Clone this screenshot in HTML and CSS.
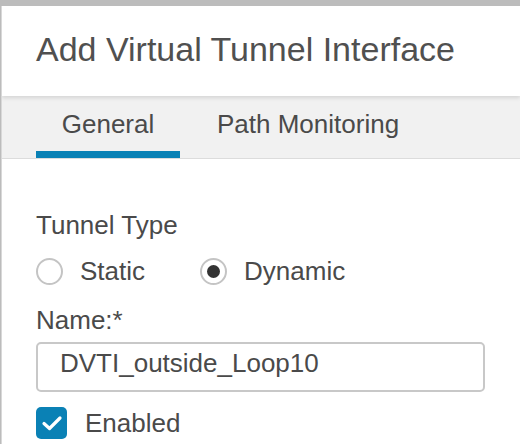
FILE: index.html
```html
<!DOCTYPE html>
<html>
<head>
<meta charset="utf-8">
<link rel="stylesheet" href="styles.css">
</head>
<body>
<div class="dialog">
  <div class="header">
    <h1 class="title">Add Virtual Tunnel Interface</h1>
  </div>
  <div class="tabs">
    <div class="tab active">General</div>
    <div class="tab">Path Monitoring</div>
  </div>
  <div class="body">
    <div class="label">Tunnel Type</div>
    <div class="radios">
      <label class="radio"><span class="circle"></span><span>Static</span></label>
      <label class="radio"><span class="circle checked"></span><span>Dynamic</span></label>
    </div>
    <div class="label name">Name:*</div>
    <div class="input">DVTI_outside_Loop10</div>
    <label class="check">
      <span class="box"><svg width="22" height="18" viewBox="0 0 22 18"><path d="M3 9.5 L8.5 14.5 L19 4" fill="none" stroke="#fff" stroke-width="3.2" stroke-linecap="round" stroke-linejoin="round"/></svg></span>
      <span>Enabled</span>
    </label>
  </div>
</div>
</body>
</html>
```
FILE: styles.css
```css
html, body {
  margin: 0;
  padding: 0;
  background: #bcbcbc;
  font-family: "Liberation Sans", Arial, sans-serif;
  color: #4a4a4a;
}
.dialog {
  margin: 6px 0 0 1px;
  border-left: 1px solid #d8d8d8;
  background: #fff;
  height: 438px;
  overflow: hidden;
}
.header {
  height: 90px;
  box-sizing: border-box;
  padding: 23px 0 0 34px;
  box-shadow: 0 2px 4px rgba(0,0,0,0.12);
  position: relative;
}
.title {
  margin: 0;
  font-weight: normal;
  font-size: 34px;
  line-height: 40px;
  color: #505050;
}
.tabs {
  background: #f1f1f1;
  height: 63px;
  border-bottom: 1px solid #dcdcdc;
  display: flex;
  padding-left: 34px;
  box-sizing: border-box;
}
.tab {
  font-size: 26px;
  line-height: 30px;
  color: #4a4a4a;
  padding-top: 13px;
  box-sizing: border-box;
  height: 62px;
  border-bottom: 7px solid transparent;
  white-space: nowrap;
}
.tab.active {
  border-bottom-color: #0a81b5;
  width: 144px;
  text-align: center;
}
.tab + .tab {
  margin-left: 37px;
}
.body {
  padding: 51px 0 0 34px;
}
.label {
  font-size: 26px;
  color: #4a4a4a;
  line-height: 30px;
}
.radios {
  display: flex;
  margin-top: 17px;
  height: 28px;
  align-items: center;
}
.radio {
  display: flex;
  align-items: center;
  font-size: 26px;
  line-height: 30px;
}
.radio + .radio {
  margin-left: 55px;
}
.circle {
  width: 23px;
  height: 23px;
  border: 2px solid #c4c4c4;
  border-radius: 50%;
  margin-right: 17px;
  position: relative;
}
.circle.checked::after {
  content: "";
  position: absolute;
  left: 5px;
  top: 5px;
  width: 13px;
  height: 13px;
  border-radius: 50%;
  background: #333;
}
.name {
  margin-top: 20px;
}
.input {
  margin-top: 7px;
  width: 449px;
  height: 50px;
  box-sizing: border-box;
  border: 2px solid #c8c8c8;
  border-radius: 5px;
  font-size: 26px;
  line-height: 30px;
  padding: 4px 0 0 22px;
  color: #4a4a4a;
}
.check {
  display: flex;
  align-items: center;
  margin-top: 15px;
  font-size: 26px;
  line-height: 30px;
}
.box {
  width: 31px;
  height: 32px;
  background: #0a81b5;
  border-radius: 5px;
  display: flex;
  align-items: center;
  justify-content: center;
  margin-right: 18px;
}
```
